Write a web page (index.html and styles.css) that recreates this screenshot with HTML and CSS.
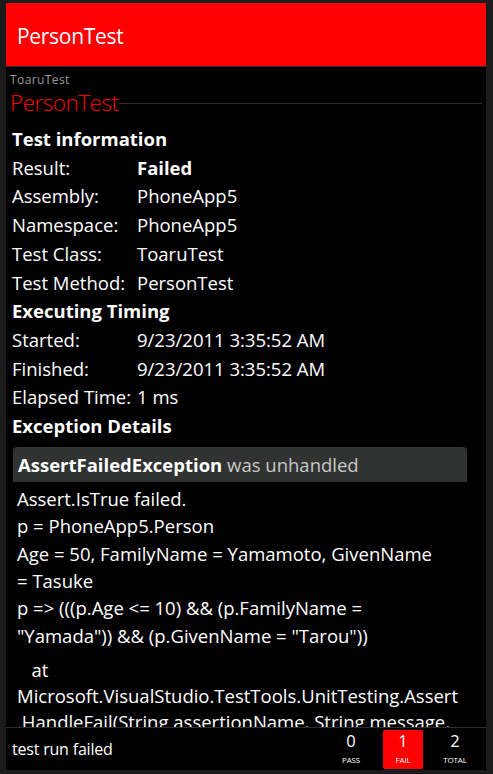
FILE: index.html
```html
<!DOCTYPE html>
<html>
<head>
<meta charset="utf-8">
<link rel="stylesheet" href="styles.css">
</head>
<body>
<div class="frame">
  <header class="appbar"><span class="appbar-title">PersonTest</span></header>
  <main class="content">
    <div class="crumb">ToaruTest</div>
    <div class="page-title"><span>PersonTest</span><span class="rule"></span></div>
    <div class="section">Test information</div>
    <div class="row"><span class="label">Result:</span><span class="value strong">Failed</span></div>
    <div class="row"><span class="label">Assembly:</span><span class="value">PhoneApp5</span></div>
    <div class="row"><span class="label">Namespace:</span><span class="value">PhoneApp5</span></div>
    <div class="row"><span class="label">Test Class:</span><span class="value">ToaruTest</span></div>
    <div class="row"><span class="label">Test Method:</span><span class="value">PersonTest</span></div>
    <div class="section">Executing Timing</div>
    <div class="row"><span class="label">Started:</span><span class="value">9/23/2011 3:35:52 AM</span></div>
    <div class="row"><span class="label">Finished:</span><span class="value">9/23/2011 3:35:52 AM</span></div>
    <div class="row"><span class="label">Elapsed Time:</span><span class="value">1 ms</span></div>
    <div class="section">Exception Details</div>
    <div class="exception">
      <div class="exc-head"><b>AssertFailedException</b> <span class="muted">was unhandled</span></div>
      <div class="exc-body">
        <div class="line">Assert.IsTrue failed.</div>
        <div class="line">p = PhoneApp5.Person</div>
        <div class="line">Age = 50, FamilyName = Yamamoto, GivenName</div>
        <div class="line">= Tasuke</div>
        <div class="line">p =&gt; (((p.Age &lt;= 10) &amp;&amp; (p.FamilyName =</div>
        <div class="line">"Yamada")) &amp;&amp; (p.GivenName = "Tarou"))</div>
      </div>
      <div class="exc-body stack">
        <div class="line">&nbsp;&nbsp;&nbsp;at</div>
        <div class="line">Microsoft.VisualStudio.TestTools.UnitTesting.Assert</div>
        <div class="line">.HandleFail(String assertionName, String message,</div>
      </div>
    </div>
  </main>
  <footer class="statusbar">
    <span class="status-text">test run failed</span>
    <div class="counters">
      <div class="counter"><span class="num">0</span><span class="cap">PASS</span></div>
      <div class="counter fail"><span class="num">1</span><span class="cap">FAIL</span></div>
      <div class="counter"><span class="num">2</span><span class="cap">TOTAL</span></div>
    </div>
  </footer>
</div>
</body>
</html>
```

FILE: styles.css
```css
html, body {
  margin: 0;
  padding: 0;
  background: #1b1b1b;
}
body {
  font-family: "Open Sans", "Noto Sans", sans-serif;
  color: #fff;
}
.frame {
  width: 480px;
  height: 767px;
  margin: 3px 0 0 6px;
  display: flex;
  flex-direction: column;
  background: #000;
}
.appbar {
  height: 63px;
  background: #ff0000;
  border-bottom: 1px solid #26343d;
  display: flex;
  align-items: center;
  padding: 0 0 0 11px;
  flex: none;
}
.appbar-title {
  font-size: 21px;
  letter-spacing: -0.3px;
  padding-top: 2px;
}
.content {
  flex: 1;
  overflow: hidden;
  padding: 5px 4px 0 4px;
}
.crumb {
  font-size: 12px;
  line-height: 16px;
  color: #9a9a9a;
  letter-spacing: 0.4px;
}
.page-title {
  display: flex;
  align-items: center;
  color: #ff0000;
  font-size: 22.5px;
  font-weight: 300;
  line-height: 30px;
  letter-spacing: -0.5px;
}
.page-title .rule {
  flex: 1;
  height: 1px;
  background: #2e2e2e;
  margin: 0 0 0 1px;
}
.section, .row {
  font-size: 18.5px;
  line-height: 28.7px;
  padding-left: 2px;
}
.section {
  font-weight: 700;
}
.page-title + .section {
  margin-top: 7px;
}
.row {
  display: flex;
}
.label {
  width: 125px;
  flex: none;
}
.strong {
  font-weight: 700;
}
.exception {
  margin: 6px 15px 0 3px;
}
.exc-head {
  background: #303331;
  border-radius: 4px 4px 0 0;
  height: 35px;
  line-height: 36px;
  padding-left: 5px;
  font-size: 18.5px;
}
.exc-head b {
  font-weight: 700;
}
.muted {
  color: #c8c8c8;
}
.exc-body {
  padding: 3px 0 0 4px;
  font-size: 18.5px;
  line-height: 27.4px;
}
.exc-body.stack {
  padding-top: 8px;
  line-height: 26px;
}
.line {
  white-space: nowrap;
}
.statusbar {
  flex: none;
  height: 42px;
  border-top: 1px solid #2e2e2e;
  display: flex;
  align-items: center;
  justify-content: space-between;
  padding: 0 0 0 6px;
}
.status-text {
  font-size: 16px;
  letter-spacing: -0.2px;
}
.counters {
  display: flex;
  gap: 12px;
  margin-right: 11px;
}
.counter {
  width: 40px;
  height: 39px;
  display: flex;
  flex-direction: column;
  align-items: center;
  border-radius: 2px;
}
.counter.fail {
  background: #ff0000;
}
.num {
  font-size: 16.5px;
  line-height: 18px;
  margin-top: 2px;
}
.cap {
  font-size: 8px;
  line-height: 10px;
  margin-top: 5px;
  letter-spacing: -0.2px;
}
```
